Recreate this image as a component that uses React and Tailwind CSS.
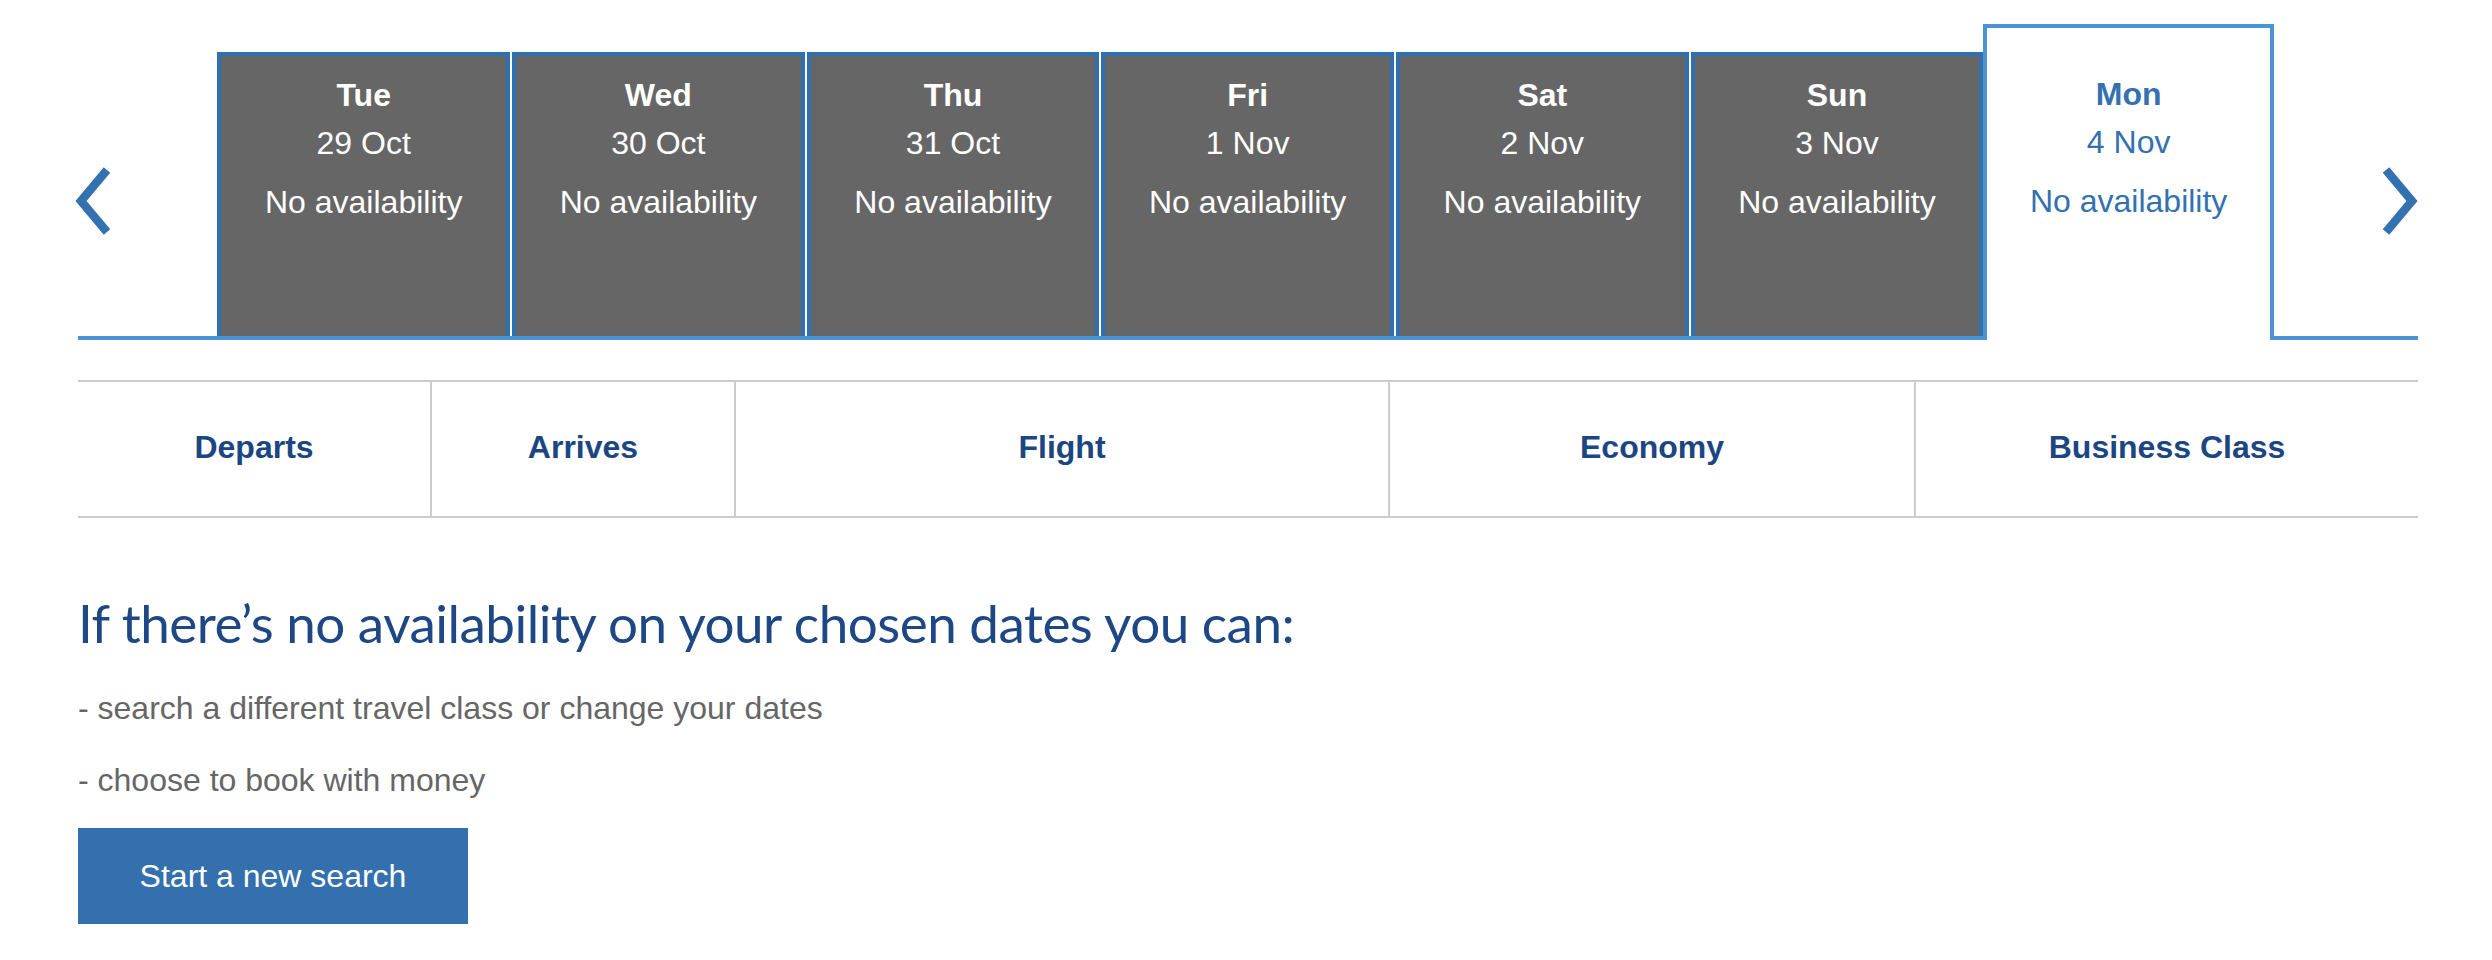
const days = [
  { day: 'Tue', date: '29 Oct' },
  { day: 'Wed', date: '30 Oct' },
  { day: 'Thu', date: '31 Oct' },
  { day: 'Fri', date: '1 Nov' },
  { day: 'Sat', date: '2 Nov' },
  { day: 'Sun', date: '3 Nov' },
]

const columns = [
  { label: 'Departs', className: 'w-[352px]' },
  { label: 'Arrives', className: 'w-[304px] border-l-2 border-[#cccccc]' },
  { label: 'Flight', className: 'w-[654px] border-l-2 border-[#cccccc]' },
  { label: 'Economy', className: 'w-[526px] border-l-2 border-[#cccccc]' },
  { label: 'Business Class', className: 'flex-1 border-l-2 border-[#cccccc]' },
]

function Chevron({ flip }) {
  return (
    <svg width="36" height="68" viewBox="0 0 36 68" className={flip ? 'rotate-180' : ''}>
      <polyline points="32,3 6,34 32,65" fill="none" stroke="#3371b0" strokeWidth="8.5" />
    </svg>
  )
}

export default function App() {
  return (
    <div className="min-h-screen bg-white font-['Liberation_Sans',Arial,sans-serif]">
      <div className="ml-[78px] w-[2340px] pt-[24px]">
        {/* date carousel */}
        <div className="flex items-end">
          <div className="w-[140px] h-[316px] border-b-4 border-[#4b93d4] pt-[143px]">
            <div className="-ml-[3px]">
              <Chevron />
            </div>
          </div>
          <div className="flex border-b-4 border-[#4b93d4]">
            {days.map((d, i) => (
              <div
                key={d.day}
                className={
                  'w-[292.67px] h-[284px] border-4 border-b-0 border-[#3070b0] bg-[#666666] pt-[15px] text-center text-[32px] leading-[48px] text-white ' +
                  (i < 5 ? 'mr-[2px]' : '')
                }
              >
                <div className="font-bold">{d.day}</div>
                <div>{d.date}</div>
                <div className="mt-[11px]">No availability</div>
              </div>
            ))}
          </div>
          <div className="w-[292px] h-[316px] border-4 border-b-0 border-[#4b93d4] bg-white pt-[42px] text-center text-[32px] leading-[48px] text-[#3371b0]">
            <div className="font-bold">Mon</div>
            <div>4 Nov</div>
            <div className="mt-[11px]">No availability</div>
          </div>
          <div className="flex-1 h-[316px] border-b-4 border-[#4b93d4] pt-[143px] pl-[108px]">
            <Chevron flip />
          </div>
        </div>

        {/* table header */}
        <div className="mt-[40px] flex h-[138px] border-y-2 border-[#cccccc]">
          {columns.map((c) => (
            <div
              key={c.label}
              className={'flex items-center justify-center pb-[4px] text-[32px] font-bold text-[#1c4682] ' + c.className}
            >
              {c.label}
            </div>
          ))}
        </div>

        {/* no availability message */}
        <h2 className="mt-[73px] font-['Lato',sans-serif] text-[53px] leading-[1.2] tracking-[-0.5px] text-[#1d4885]">
          If there’s no availability on your chosen dates you can:
        </h2>
        <p className="mt-[29px] text-[32px] leading-[48px] text-[#666666]">- search a different travel class or change your dates</p>
        <p className="mt-[24px] text-[32px] leading-[48px] text-[#666666]">- choose to book with money</p>
        <button className="mt-[24px] h-[96px] w-[390px] bg-[#3370ad] text-[32px] text-white">Start a new search</button>
      </div>
    </div>
  )
}
